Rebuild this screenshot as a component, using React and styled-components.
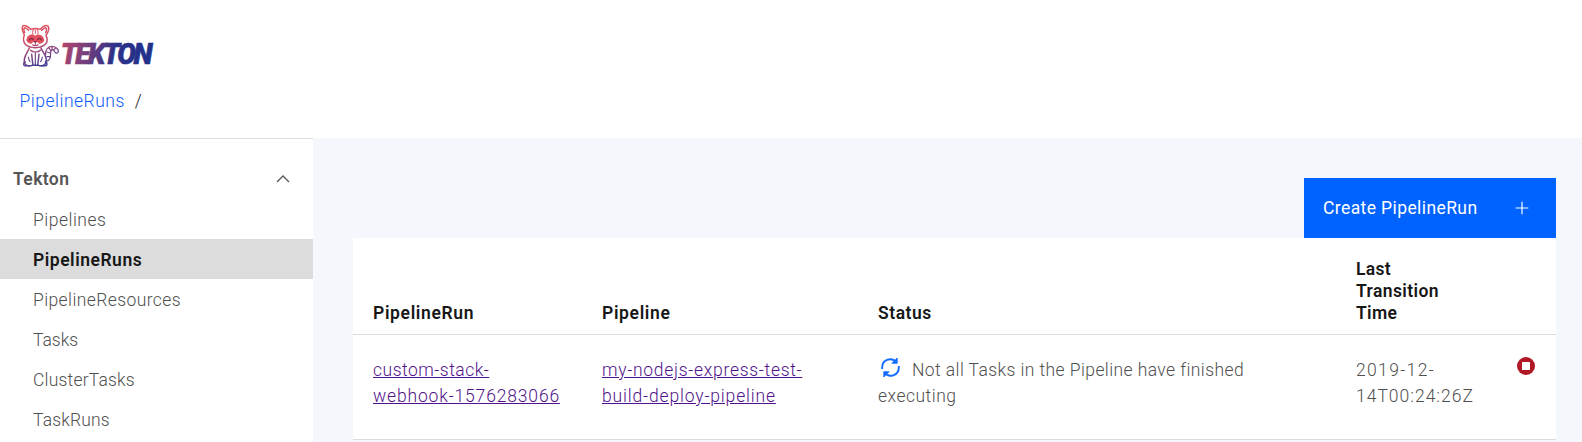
import React from 'react';
import styled, { createGlobalStyle } from 'styled-components';

const GlobalStyle = createGlobalStyle`
  * { box-sizing: border-box; }
  body {
    margin: 0;
    overflow: hidden;
    background: #fff;
    color: #505050;
    font: 350 17.5px/26px Roboto, 'Liberation Sans', sans-serif;
  }
`;

const Page = styled.div`
  display: flex;
  flex-direction: column;
  height: 442px;
  overflow: hidden;
`;

const Header = styled.header`
  height: 138px;
  padding: 22px 18px 0;
`;

const LogoSvg = styled.svg`
  display: block;
  width: 137px;
  height: 48px;
  overflow: visible;
`;

const Wordmark = styled.text`
  font: italic 900 88px/1 Roboto, sans-serif;
  letter-spacing: -7.5px;
`;

const Breadcrumb = styled.nav`
  display: flex;
  gap: 10px;
  padding: 18px 1.5px 0;
  color: #171717;
`;

const BreadcrumbLink = styled.a`
  color: #0f5cfe;
  letter-spacing: 0.51px;
`;

const Body = styled.div`
  display: flex;
  flex: 1;
  min-height: 0;
`;

const Sidebar = styled.aside`
  width: 313px;
  padding-top: 20px;
  border-top: 1px solid #dcdcdc;
`;

const SectionTitle = styled.div`
  display: flex;
  align-items: center;
  justify-content: space-between;
  height: 40px;
  padding: 0 23px 0 13px;
  color: #565656;
  font-weight: 600;
  letter-spacing: 0.4px;
`;

const NavItem = styled.a`
  display: flex;
  align-items: center;
  height: 40px;
  padding-top: 1px;
  padding-left: 33px;
  letter-spacing: ${(p) => p.$spacing}px;
  color: ${(p) => (p.$active ? '#171717' : 'inherit')};
  background: ${(p) => (p.$active ? '#dcdcdc' : 'transparent')};
  font-weight: ${(p) => (p.$active ? 600 : 'inherit')};
`;

const Content = styled.main`
  flex: 1;
  padding: 40px 26px 0 40px;
  background: #f4f7fc;
`;

const Toolbar = styled.div`
  display: flex;
  justify-content: flex-end;
`;

const CreateButton = styled.button`
  display: flex;
  align-items: center;
  justify-content: space-between;
  width: 252px;
  height: 60px;
  padding: 0 27px 0 19px;
  border: 0;
  background: #0062ff;
  color: #fff;
  font: inherit;
  font-weight: 400;
  letter-spacing: 0.4px;
`;

const Row = styled.div`
  display: grid;
  grid-template-columns: 229px 276px 478px 161px 1fr;
  background: #fff;
  border-bottom: 1px solid #dcdcdc;
`;

const HeadRow = styled(Row)`
  height: 97px;
  align-items: end;
  padding-bottom: 10px;
  color: #171717;
  font-weight: 600;
  line-height: 22px;
`;

const DataRow = styled(Row)`
  height: 105px;
  padding-top: 22px;
`;

const Cell = styled.div`
  padding-left: 20px;
`;

const Line = styled.span`
  display: block;
  white-space: nowrap;
  letter-spacing: ${(p) => p.$spacing}px;
`;

const RunLink = styled.a`
  color: #50138c;
`;

const StatusIcon = styled.svg`
  display: inline-block;
  width: 25px;
  height: 25px;
  margin-top: -6px;
  margin-right: 9px;
  vertical-align: -4px;
`;

const StopIcon = styled.svg`
  display: block;
  width: 18px;
  height: 18px;
`;

function Logo() {
  return (
    <LogoSvg viewBox="0 0 411 144">
      <defs>
        <linearGradient id="cat" gradientUnits="userSpaceOnUse" x1="50" y1="10" x2="85" y2="135">
          <stop offset="0" stopColor="#e4545f" />
          <stop offset="0.4" stopColor="#c4506e" />
          <stop offset="0.7" stopColor="#784487" />
          <stop offset="1" stopColor="#38409a" />
        </linearGradient>
        <linearGradient id="word" x1="0" y1="0" x2="1" y2="0.1">
          <stop offset="0" stopColor="#b8476a" />
          <stop offset="0.3" stopColor="#793f7c" />
          <stop offset="0.62" stopColor="#2c3189" />
          <stop offset="1" stopColor="#23318b" />
        </linearGradient>
      </defs>
      <g fill="none" stroke="url(#cat)" strokeWidth="4.5" strokeLinecap="round" strokeLinejoin="round">
        <path d="M19 39C12 25 10 16 15 11c6-3 17 4 23 11 8-3 21-3 29 0 7-8 17-14 23-10 4 6 1 18-6 28 5 10 5 20-2 27-8 8-17 10-30 10S29 75 22 67c-6-8-7-18-3-28Z" />
        <path d="M20 32c-3-7-3-13 0-15 4 0 8 4 12 8M83 32c3-7 3-13 0-15-4 0-8 4-12 8" />
        <path d="M46 22c-3 7-3 14-1 16M58 22c3 7 3 14 1 16M52 24v10" strokeWidth="3" />
        <path d="M44 68c3 4 6 4 8 0 2 4 5 4 8 0M52 62v5" strokeWidth="3.5" />
        <path d="M34 78c-6 14-13 21-15 34-1 10 3 18 11 19h9c5 0 7-3 5-8l-3-26M69 78c6 13 14 21 16 33 1 12-5 19-13 20h-7c-5 0-7-3-5-8l3-26M45 130h14" />
        <path d="M22 120c-7 2-7 12 2 11h10M82 120c7 2 7 12-2 11H70" />
        <path d="M37 84c7 8 24 8 31 0M52 92v36M31 105c1 6 2 10 5 14M73 105c-1 6-2 10-5 14" strokeWidth="3.5" />
        <path d="M83 98c-2-13 6-24 18-25 12 0 20 8 20 15-1 7-9 7-11 1-2-6-8-7-11-2-3 6 1 15-4 24-3 5-8 7-12 7M93 78l5 8M103 74l-1 8M113 79l-6 4M87 90l9 3M87 104l9-1" strokeWidth="3.8" />
      </g>
      <path d="M25 55c2-14 11-18 20-17 5 3 9 3 14 0 10-1 18 4 20 17-3 7-9 11-16 10l-6-6H46l-6 6c-8 1-13-4-15-10Z" fill="#e44f5c" />
      <path d="M34 54c4-6 9-6 12-1M59 53c3-5 8-5 12 1" fill="none" stroke="#7d2947" strokeWidth="4" strokeLinecap="round" />
      <path d="M46 57h12l-6 7Z" fill="#7d2947" />
      <g transform="translate(128 127) scale(0.95 1)">
        <Wordmark fill="url(#word)" stroke="url(#word)" strokeWidth="2">
          TEKTON
        </Wordmark>
      </g>
    </LogoSvg>
  );
}

const navItems = [
  { label: 'Pipelines', spacing: 0.5 },
  { label: 'PipelineRuns', spacing: 0.52, active: true },
  { label: 'PipelineResources', spacing: 0.4 },
  { label: 'Tasks', spacing: 0 },
  { label: 'ClusterTasks', spacing: 0.2 },
  { label: 'TaskRuns', spacing: 0.15 },
];

export default function App() {
  return (
    <Page>
      <GlobalStyle />
      <Header>
        <Logo />
        <Breadcrumb>
          <BreadcrumbLink>PipelineRuns</BreadcrumbLink>
          <span>/</span>
        </Breadcrumb>
      </Header>
      <Body>
        <Sidebar>
          <SectionTitle>
            Tekton
            <svg width="14" height="8" viewBox="0 0 14 8" fill="none" stroke="#565656" strokeWidth="1.3">
              <path d="M1 7l6-6 6 6" />
            </svg>
          </SectionTitle>
          {navItems.map((item) => (
            <NavItem key={item.label} $active={item.active} $spacing={item.spacing}>
              {item.label}
            </NavItem>
          ))}
        </Sidebar>
        <Content>
          <Toolbar>
            <CreateButton>
              Create PipelineRun
              <svg width="14" height="14" viewBox="0 0 14 14" stroke="#fff" strokeWidth="1.2">
                <path d="M7 .7v12.6M.7 7h12.6" />
              </svg>
            </CreateButton>
          </Toolbar>
          <HeadRow>
            <Cell><Line $spacing={0.65}>PipelineRun</Line></Cell>
            <Cell><Line $spacing={0.65}>Pipeline</Line></Cell>
            <Cell><Line $spacing={0.55}>Status</Line></Cell>
            <Cell>
              <Line $spacing={0.3}>Last</Line>
              <Line $spacing={0.4}>Transition</Line>
              <Line $spacing={0.3}>Time</Line>
            </Cell>
          </HeadRow>
          <DataRow>
            <Cell>
              <RunLink>
                <Line $spacing={0.5}><u>custom-stack-</u></Line>
                <Line $spacing={0.84}><u>webhook-1576283066</u></Line>
              </RunLink>
            </Cell>
            <Cell>
              <RunLink>
                <Line $spacing={0.71}><u>my-nodejs-express-test-</u></Line>
                <Line $spacing={0.84}><u>build-deploy-pipeline</u></Line>
              </RunLink>
            </Cell>
            <Cell>
              <Line $spacing={0.41}>
                <StatusIcon viewBox="0 0 25 25" fill="none" stroke="#0f6bfe" strokeWidth="1.9">
                  <path d="M4.2 14V12.2a8 8 0 0 1 14.4-4.7M20.8 11V12.8a8 8 0 0 1-14.4 4.7" />
                  <path d="M19.2 3v5.3h-5.3ZM5.8 22v-5.3h5.3Z" fill="#0f6bfe" strokeWidth="0.8" />
                </StatusIcon>
                Not all Tasks in the Pipeline have finished
              </Line>
              <Line $spacing={0.5}>executing</Line>
            </Cell>
            <Cell>
              <Line $spacing={1.35}>2019-12-</Line>
              <Line $spacing={1}>14T00:24:26Z</Line>
            </Cell>
            <Cell>
              <StopIcon viewBox="0 0 18 18">
                <circle cx="9" cy="9" r="9" fill="#b01826" />
                <rect x="5" y="5" width="8" height="8" rx="0.6" fill="#fff" />
              </StopIcon>
            </Cell>
          </DataRow>
        </Content>
      </Body>
    </Page>
  );
}
